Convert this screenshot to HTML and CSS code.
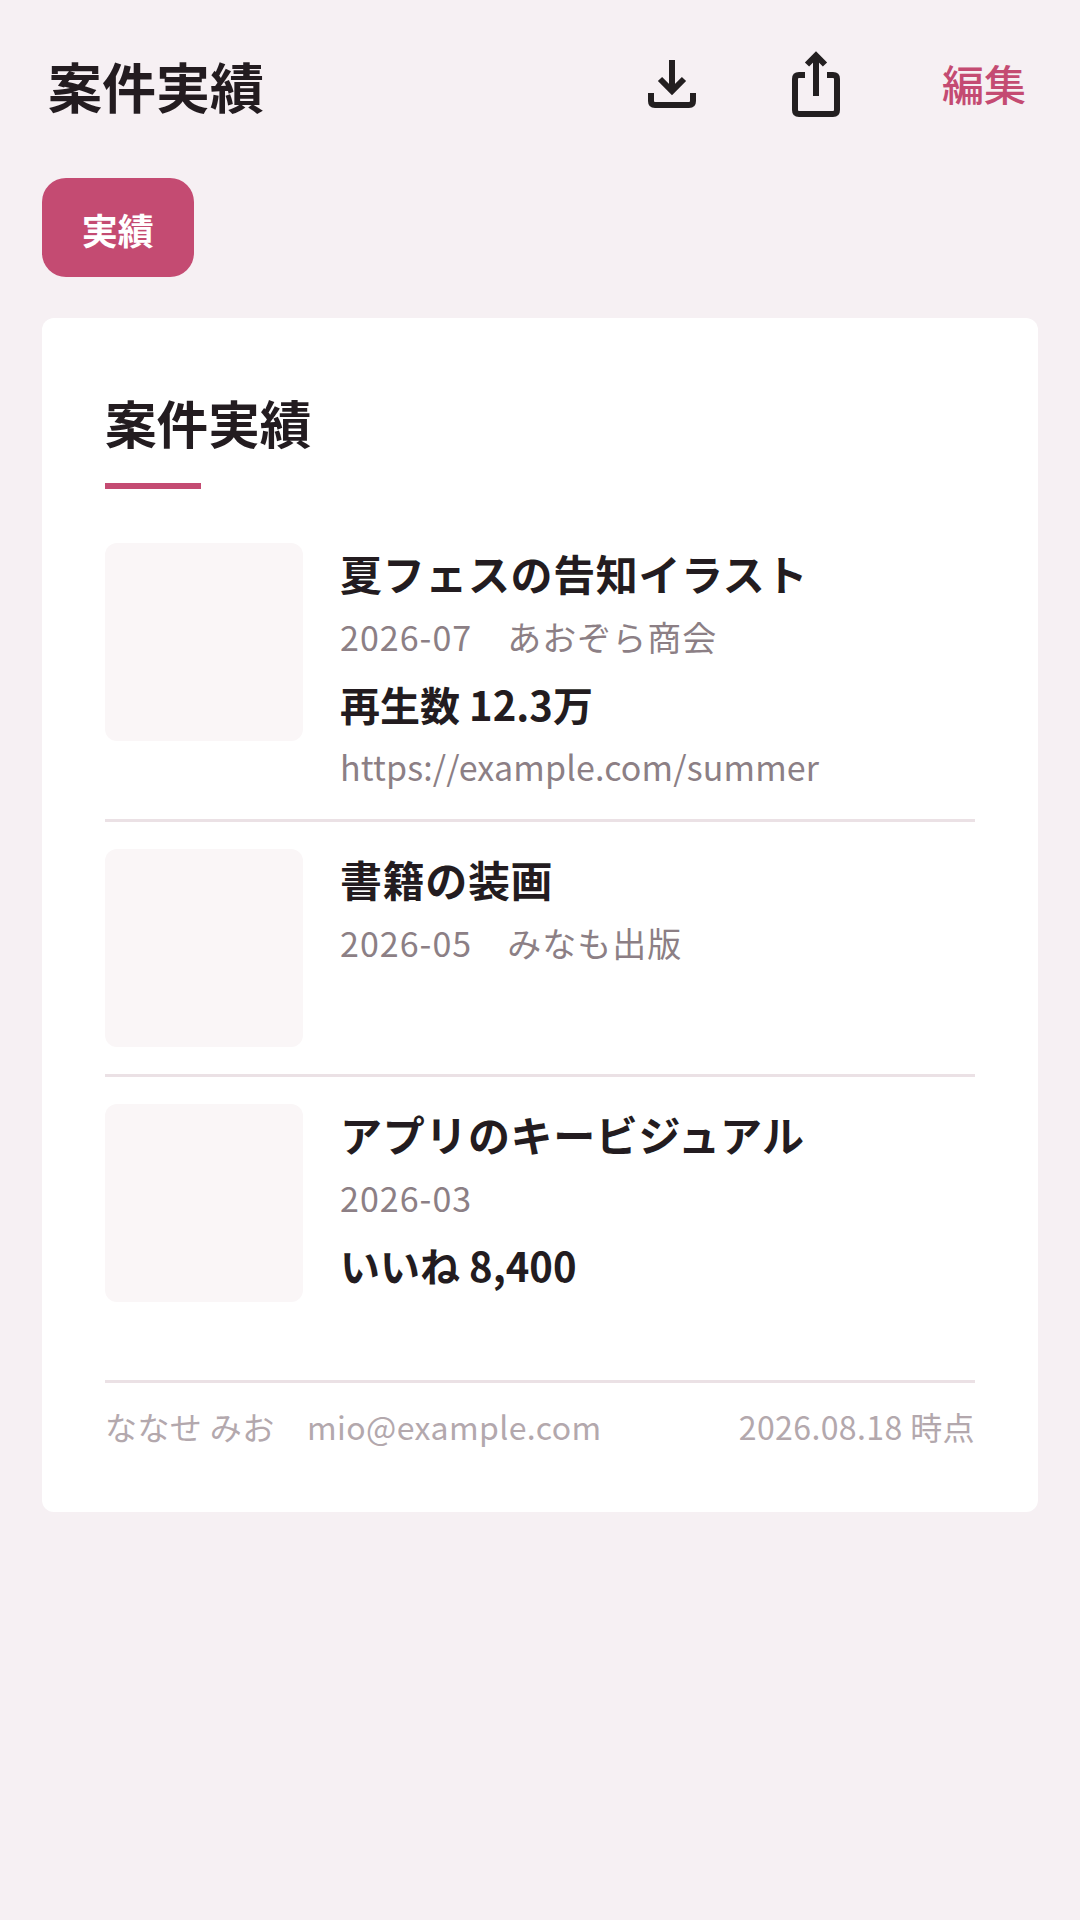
FILE: index.html
```html
<!DOCTYPE html>
<html lang="ja">
<head>
<meta charset="utf-8">
<title>案件実績</title>
<link rel="stylesheet" href="styles.css">
</head>
<body>
<header class="topbar">
  <h1 class="page-title">案件実績</h1>
  <div class="actions">
    <svg class="icon-download" width="48" height="48" viewBox="0 0 48 48" fill="none" stroke="#231f20" stroke-width="6">
      <path d="M24 0V31M12 19L24 31L36 19"/>
      <path d="M3 33V41Q3 45 7 45H41Q45 45 45 41V33"/>
    </svg>
    <svg class="icon-share" width="48" height="66" viewBox="0 0 48 66" fill="none" stroke="#231f20" stroke-width="6">
      <path d="M24 45V4.5M15 13.5L24 4.5L33 13.5"/>
      <path d="M13 24H7Q3 24 3 28V59Q3 63 7 63H41Q45 63 45 59V28Q45 24 41 24H35"/>
    </svg>
    <span class="edit">編集</span>
  </div>
</header>
<nav class="tabs"><span class="tab">実績</span></nav>
<main class="card">
  <h2 class="section-title">案件実績</h2>
  <div class="accent"></div>
  <ul class="works">
    <li class="work">
      <div class="thumb"></div>
      <div class="info">
        <div class="name">夏フェスの告知イラスト</div>
        <div class="meta">2026-07　あおぞら商会</div>
        <div class="stat">再生数 12.3万</div>
        <div class="url">https://example.com/summer</div>
      </div>
    </li>
    <li class="work">
      <div class="thumb"></div>
      <div class="info">
        <div class="name">書籍の装画</div>
        <div class="meta">2026-05　みなも出版</div>
      </div>
    </li>
    <li class="work">
      <div class="thumb"></div>
      <div class="info">
        <div class="name">アプリのキービジュアル</div>
        <div class="meta">2026-03</div>
        <div class="stat">いいね 8,400</div>
      </div>
    </li>
  </ul>
  <footer class="foot">
    <span>ななせ みお　mio@example.com</span>
    <span>2026.08.18 時点</span>
  </footer>
</main>
</body>
</html>
```
FILE: styles.css
```css
* { box-sizing: border-box; }
html, body { margin: 0; padding: 0; }
body {
  width: 1080px;
  height: 1920px;
  background: #f6f0f3;
  color: #231c20;
  font-family: "Noto Sans CJK JP", "Noto Sans", sans-serif;
  overflow: hidden;
}
.topbar {
  display: flex;
  align-items: center;
  justify-content: space-between;
  height: 178.4px;
  padding: 0 54px 6px 48px;
}
.page-title { margin: 0; font-size: 54px; font-weight: 700; line-height: 1.2; }
.actions { display: flex; align-items: center; margin-bottom: 4px; }
.icon-download { margin-right: 96px; }
.icon-share { margin-right: 102px; }
.edit { font-size: 42px; color: #c44b72; font-weight: 500; margin-bottom: 4px; }
.tabs { display: flex; padding-left: 42px; }
.tab {
  width: 151.5px;
  height: 99px;
  padding-top: 2px;
  border-radius: 24px;
  background: #c44b72;
  color: #fff;
  font-size: 36px;
  font-weight: 700;
  display: flex;
  align-items: center;
  justify-content: center;
}
.card {
  margin: 40.6px 42px 0;
  padding: 68px 63px 0;
  height: 1194px;
  background: #fff;
  border-radius: 12px;
}
.section-title { margin: 0; font-size: 51.6px; font-weight: 700; line-height: 72px; }
.accent { width: 96px; height: 6px; background: #c44b72; margin-top: 25px; }
.works { list-style: none; margin: 0; padding: 0; }
.work { display: flex; gap: 37px; padding: 54px 0 27px; border-bottom: 3px solid #ebe1e5; }
.work + .work { padding-top: 27px; }
.work:last-child { border-bottom: 0; }
.thumb { width: 198px; height: 198px; flex: none; background: #faf6f7; border-radius: 12px; }
.info { min-width: 0; }
.name { font-size: 42px; font-weight: 700; line-height: 59px; letter-spacing: 0.015em; }
.meta { font-size: 34px; color: #8c7f85; line-height: 51px; margin-top: 9px; letter-spacing: 0.03em; }
.stat { font-size: 40px; font-weight: 700; line-height: 60px; margin-top: 12px; }
.url { font-size: 34px; color: #8c7f85; line-height: 50px; margin-top: 8px; letter-spacing: 0.15px; }
.foot {
  display: flex;
  justify-content: space-between;
  margin-top: 51px;
  padding-top: 20px;
  border-top: 3px solid #ebe1e5;
  font-size: 32px;
  letter-spacing: 0.4px;
  color: #b3a8ad;
}
```
